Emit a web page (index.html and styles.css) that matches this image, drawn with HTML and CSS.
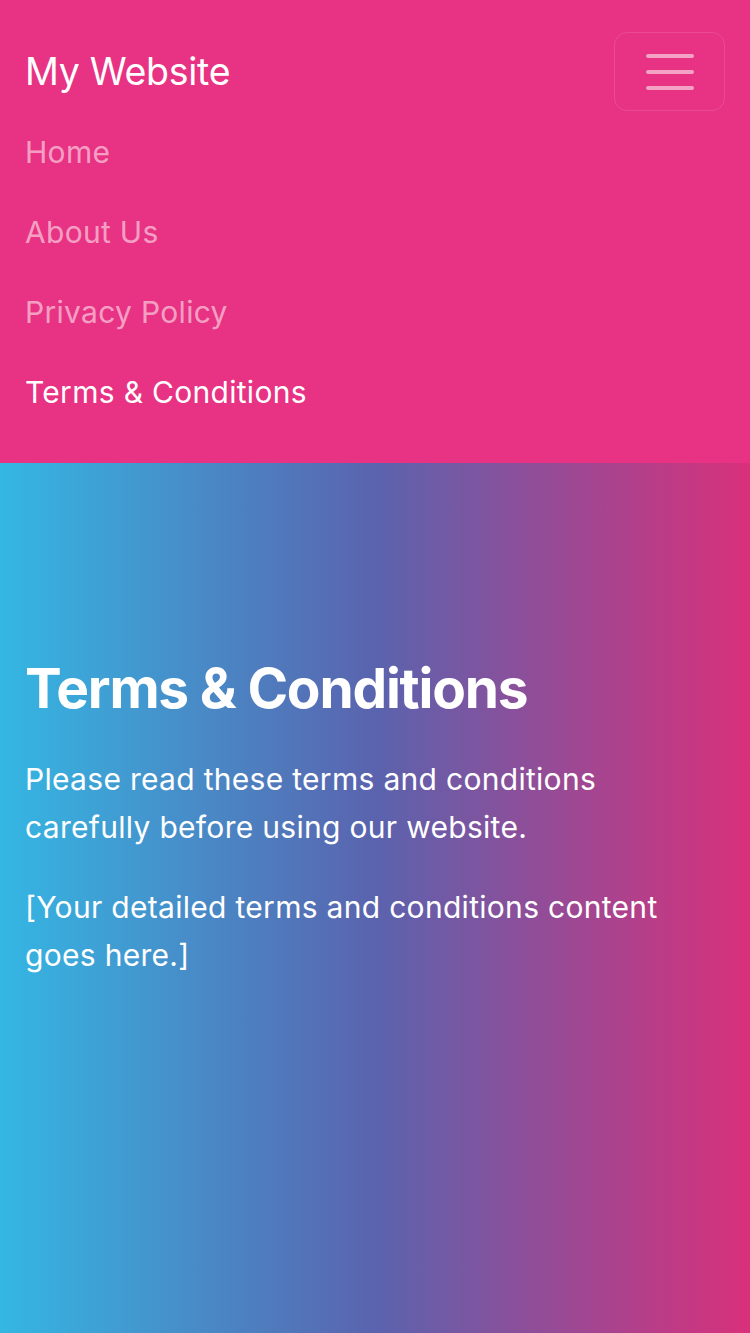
FILE: index.html
```html
<!DOCTYPE html>
<html lang="en">
<head>
<meta charset="utf-8">
<title>Terms &amp; Conditions - My Website</title>
<link rel="stylesheet" href="styles.css">
</head>
<body>
<nav class="navbar">
  <div class="navbar-row">
    <a class="brand" href="#">My Website</a>
    <button class="toggler" type="button" aria-label="Toggle navigation">
      <svg class="toggler-icon" viewBox="0 0 30 30" width="60" height="60">
        <path d="M4 7h22M4 15h22M4 23h22" stroke="rgba(255,255,255,0.55)" stroke-width="2" stroke-linecap="round" fill="none"/>
      </svg>
    </button>
  </div>
  <ul class="nav-list">
    <li><a class="nav-link" href="#">Home</a></li>
    <li><a class="nav-link" href="#">About Us</a></li>
    <li><a class="nav-link" href="#">Privacy Policy</a></li>
    <li><a class="nav-link active" href="#">Terms &amp; Conditions</a></li>
  </ul>
</nav>
<main class="hero">
  <h1 class="hero-title">Terms &amp; Conditions</h1>
  <p class="hero-text">Please read these terms and conditions carefully before using our website.</p>
  <p class="hero-text">[Your detailed terms and conditions content goes here.]</p>
</main>
</body>
</html>
```
FILE: styles.css
```css
* { box-sizing: border-box; }
html, body { margin: 0; padding: 0; }
body {
  font-family: Inter, "Noto Sans", "Liberation Sans", sans-serif;
  font-size: 30px;
  line-height: 48px;
  letter-spacing: 0.3px;
  color: #fff;
  background: #e83283;
  min-height: 1333px;
  display: flex;
  flex-direction: column;
}
.navbar {
  background: #e83283;
  padding: 32px 25px 31px;
}
.navbar-row {
  display: flex;
  align-items: center;
  justify-content: space-between;
}
.brand {
  color: #fff;
  text-decoration: none;
  font-size: 37.5px;
  line-height: 56px;
  letter-spacing: -0.3px;
}
.toggler {
  display: flex;
  align-items: center;
  justify-content: center;
  width: 111px;
  height: 79px;
  padding: 0;
  background: transparent;
  border: 1.5px solid rgba(255,255,255,0.12);
  border-radius: 13px;
}
.toggler-icon { display: block; width: 60px; height: 60px; }
.nav-list {
  list-style: none;
  margin: 0;
  padding: 1px 0 0;
}
.nav-link {
  display: block;
  padding: 16px 0;
  color: rgba(255,255,255,0.55);
  text-decoration: none;
}
.nav-link.active { color: #fff; }
.hero {
  flex: 1;
  padding: 192px 25px 60px;
  background: linear-gradient(to right, #34b7e3 0%, #5a63ae 50%, #d9307b 100%);
}
.hero-title {
  margin: 0 0 34px;
  font-size: 55px;
  line-height: 66px;
  font-weight: 700;
  letter-spacing: -1.2px;
}
.hero-text {
  margin: 0 0 32px;
}
```
